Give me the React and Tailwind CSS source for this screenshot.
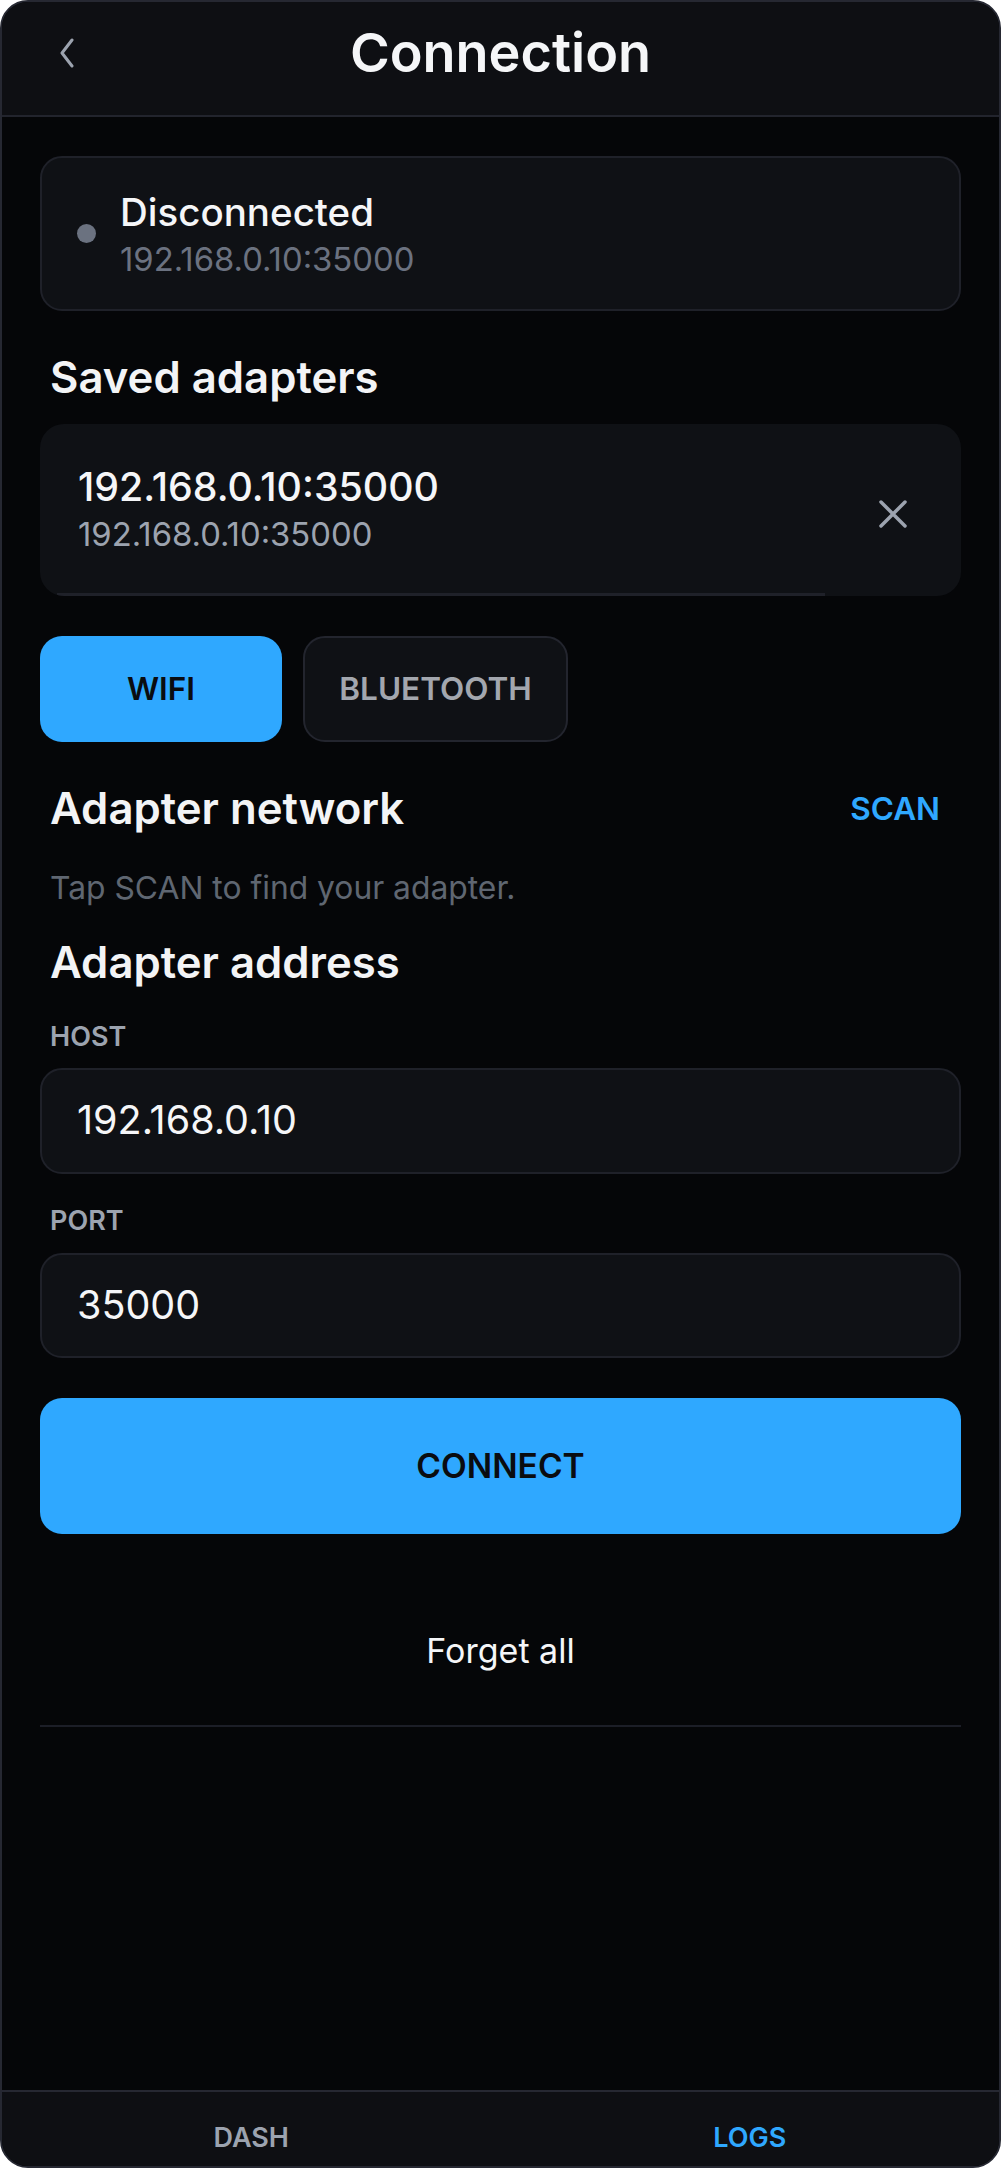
import React from "react";

const Chevron = () => (
  <svg width="16" height="30" viewBox="0 0 16 30" fill="none">
    <path d="M13 2 L3 15 L13 28" stroke="#9ca3af" strokeWidth="3" strokeLinecap="round" strokeLinejoin="round" />
  </svg>
);

const Close = () => (
  <svg width="28" height="28" viewBox="0 0 28 28" fill="none">
    <path d="M2 2 L26 26 M26 2 L2 26" stroke="#9ca3af" strokeWidth="3.5" strokeLinecap="round" />
  </svg>
);

const App = () => {
  return (
    <div
      className="w-[1001px] h-[2168px] flex flex-col bg-[#050608] border-2 border-[#262832] rounded-[28px] overflow-hidden"
      style={{ fontFamily: "Inter, 'Noto Sans', sans-serif" }}
    >
      {/* header */}
      <div className="h-[115px] shrink-0 border-b-2 border-[#22242d] bg-[#0e0f13] grid grid-cols-[1fr_auto_1fr] items-center pb-[12px]">
        <div className="pl-[57px] flex items-center">
          <Chevron />
        </div>
        <h1 className="text-[54px] leading-none font-semibold text-[#f5f6f8]">Connection</h1>
        <div />
      </div>

      <div className="px-[38px] flex flex-col">
        {/* status */}
        <div className="mt-[39px] h-[155px] rounded-[22px] border-2 border-[#1f2129] bg-[#0f1115] flex items-center px-[35px] gap-[24px]">
          <div className="w-[19px] h-[19px] rounded-full bg-[#6b7280]" />
          <div className="flex flex-col gap-[5px]">
            <p className="text-[38.5px] leading-[46px] font-medium text-[#f5f6f8]">Disconnected</p>
            <p className="text-[32.8px] leading-[38px] text-[#6b7280]">192.168.0.10:35000</p>
          </div>
        </div>

        <h2 className="mt-[42px] pl-[10px] text-[43.7px] leading-[50px] font-semibold text-[#f3f4f6]">Saved adapters</h2>

        {/* saved adapter */}
        <div className="mt-[21px] h-[172px] rounded-[24px] bg-[#0f1115] flex flex-col overflow-hidden">
          <div className="flex-1 flex items-center justify-between pl-[38px] pr-[54px]">
            <div className="flex flex-col gap-[5px]">
              <p className="text-[39.3px] leading-[46px] font-medium text-[#f5f6f8]">192.168.0.10:35000</p>
              <p className="text-[32.8px] leading-[38px] text-[#9ca3af]">192.168.0.10:35000</p>
            </div>
            <div className="pt-[10px]">
              <Close />
            </div>
          </div>
          <div className="h-[3px] ml-[17px] w-[768px] bg-[#1f2129]" />
        </div>

        {/* transport tabs */}
        <div className="mt-[40px] flex gap-[21px]">
          <button className="w-[242px] h-[106px] rounded-[22px] bg-[#2fa8ff] text-[31.5px] font-semibold text-[#0a0c10]">
            WIFI
          </button>
          <button className="w-[265px] h-[106px] rounded-[22px] border-2 border-[#23252e] bg-[#0f1115] text-[31.5px] font-semibold text-[#a3a7ae]">
            BLUETOOTH
          </button>
        </div>

        <div className="mt-[42px] flex items-center justify-between pl-[10px] pr-[21px]">
          <h2 className="text-[43.7px] leading-[50px] font-semibold text-[#f3f4f6]">Adapter network</h2>
          <span className="text-[31.5px] font-semibold text-[#2fa8ff]">SCAN</span>
        </div>
        <p className="mt-[35px] pl-[10px] text-[31.8px] leading-[37px] text-[#5f6671]">Tap SCAN to find your adapter.</p>

        <h2 className="mt-[32px] pl-[10px] text-[43.7px] leading-[50px] font-semibold text-[#f3f4f6]">Adapter address</h2>

        <p className="mt-[33px] pl-[10px] text-[27px] leading-[32px] font-semibold text-[#9ca3af]">HOST</p>
        <div className="mt-[15px] h-[106px] rounded-[22px] border-2 border-[#1f2129] bg-[#0f1115] flex items-center px-[35px] text-[39.5px] text-[#f5f6f8]">
          192.168.0.10
        </div>

        <p className="mt-[31px] pl-[10px] text-[27px] leading-[32px] font-semibold text-[#9ca3af]">PORT</p>
        <div className="mt-[16px] h-[105px] rounded-[22px] border-2 border-[#1f2129] bg-[#0f1115] flex items-center px-[35px] text-[39.5px] text-[#f5f6f8]">
          35000
        </div>

        <button className="mt-[40px] h-[136px] rounded-[22px] bg-[#2fa8ff] text-[33.5px] font-semibold text-[#0a0c10]">
          CONNECT
        </button>

        <button className="mt-[41px] h-[150px] flex items-center justify-center text-[34px] text-[#f5f6f8]">
          Forget all
        </button>
        <div className="h-[2px] bg-[#1c1e27]" />
      </div>

      <div className="flex-1" />

      {/* bottom tabs */}
      <div className="h-[76px] shrink-0 border-t-2 border-[#262832] bg-[#0e0f13] grid grid-cols-2">
        <div className="flex items-center justify-center pt-[18px] text-[27px] leading-[32px] font-semibold text-[#9ca3af]">DASH</div>
        <div className="flex items-center justify-center pt-[18px] text-[27px] leading-[32px] font-semibold text-[#2fa8ff]">LOGS</div>
      </div>
    </div>
  );
};

export default App;
